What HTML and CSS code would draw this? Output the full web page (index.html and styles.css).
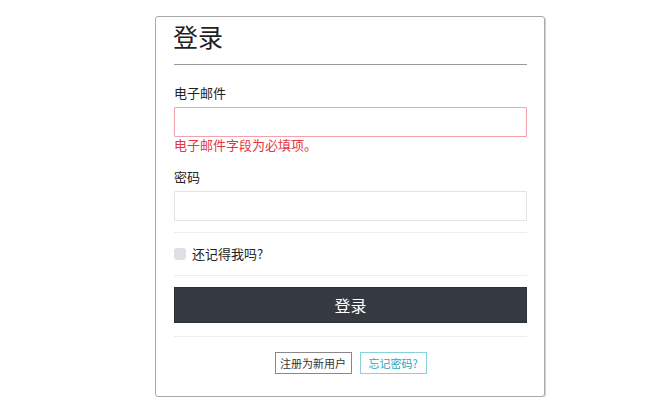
FILE: index.html
```html
<!DOCTYPE html>
<html lang="zh-CN">
<head>
<meta charset="utf-8">
<title>登录</title>
<link rel="stylesheet" href="styles.css">
</head>
<body>
<div class="page">
  <div class="card">
    <h2 class="title">登录</h2>
    <hr class="rule-dark">
    <form class="form">
      <label class="label label-first">电子邮件</label>
      <input class="input input-invalid" type="email">
      <div class="error">电子邮件字段为必填项。</div>
      <label class="label label-second">密码</label>
      <input class="input" type="password">
      <hr class="rule-light rule-a">
      <div class="check-row">
        <span class="checkbox"></span>
        <span class="check-text">还记得我吗?</span>
      </div>
      <hr class="rule-light rule-b">
      <button type="button" class="btn-primary">登录</button>
      <hr class="rule-light rule-c">
      <div class="links">
        <a class="btn-sm btn-gray">注册为新用户</a>
        <a class="btn-sm btn-info">忘记密码?</a>
      </div>
    </form>
  </div>
</div>
</body>
</html>
```
FILE: styles.css
```css
* { box-sizing: border-box; }
html, body { margin: 0; padding: 0; background: #fff; }
body {
  font-family: "Noto Sans CJK SC", "Noto Sans", "Liberation Sans", sans-serif;
  color: #212529;
}
.page { padding: 16px 0 0 155px; }
.card {
  width: 390px;
  border: 1px solid #a9a9a9;
  border-radius: 3px;
  box-shadow: 1px 1px 1px rgba(0,0,0,0.18);
  padding: 0 17px 22px 18px;
}
.title {
  margin: 4px 0 0 -1px;
  font-size: 25px;
  font-weight: 400;
  line-height: 30px;
  height: 30px;
  color: #1f1f1f;
}
hr { border: 0; margin: 0; height: 1px; }
.rule-dark { background: #9a9a9a; margin-top: 13px; }
.rule-light { background: #ececec; }
.form { display: flex; flex-direction: column; }
.label {
  font-size: 13px;
  line-height: 18px;
  color: #222;
}
.label-first { margin-top: 19px; }
.label-second { margin-top: 15px; }
.input {
  margin-top: 5px;
  height: 30px;
  width: 100%;
  border: 1px solid #e2e2e2;
  border-radius: 1px;
  outline: none;
  background: #fff;
}
.input-invalid { border-color: #f0a3aa; }
.error {
  font-size: 13px;
  line-height: 16px;
  color: #e3343f;
}
.rule-a { margin-top: 11px; }
.check-row {
  margin-top: 12px;
  display: flex;
  align-items: center;
  height: 18px;
}
.checkbox {
  width: 12px;
  height: 12px;
  border-radius: 3px;
  background: #dde0e5;
}
.check-text {
  margin-left: 6px;
  font-size: 13px;
  line-height: 18px;
  color: #222;
}
.rule-b { margin-top: 12px; }
.btn-primary {
  margin-top: 11px;
  height: 36px;
  width: 100%;
  border: 1px solid #2c3137;
  background: #343a40;
  color: #fff;
  font-family: inherit;
  font-size: 16px;
  line-height: 34px;
  padding: 0;
}
.rule-c { margin-top: 13px; }
.links {
  margin-top: 15px;
  display: flex;
  justify-content: center;
  gap: 8px;
}
.btn-sm {
  height: 22px;
  line-height: 20px;
  font-size: 11px;
  padding: 0;
  text-align: center;
  border: 1px solid #888;
  color: #333;
  background: #fff;
}
.btn-gray { width: 77px; }
.btn-info {
  width: 67px;
  border-color: #86d2de;
  color: #2aa6bd;
}
```
